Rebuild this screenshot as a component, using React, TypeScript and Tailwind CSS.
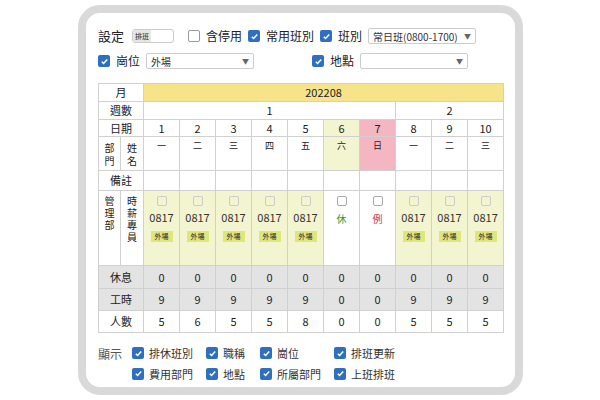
const F = { fontFamily: '"Noto Sans CJK TC", "Noto Sans", sans-serif' }

const days = [
  { d: 1, w: '一', bg: '' }, { d: 2, w: '二', bg: '' }, { d: 3, w: '三', bg: '' },
  { d: 4, w: '四', bg: '' }, { d: 5, w: '五', bg: '' }, { d: 6, w: '六', bg: 'bg-[#f3f5d0]' },
  { d: 7, w: '日', bg: 'bg-[#f4b6c2]' }, { d: 8, w: '一', bg: '' }, { d: 9, w: '二', bg: '' },
  { d: 10, w: '三', bg: '' },
]
const people = [5, 6, 5, 5, 8, 0, 0, 5, 5, 5]
const hours = [9, 9, 9, 9, 9, 0, 0, 9, 9, 9]

function Check({ on = true }: { on?: boolean }) {
  return on ? (
    <span className="inline-flex w-[12px] h-[12px] rounded-[2px] bg-[#2f6fc0] items-center justify-center shrink-0">
      <svg width="9" height="9" viewBox="0 0 10 10"><path d="M2 5.2l2 2 4-4.4" stroke="#fff" strokeWidth="1.7" fill="none" /></svg>
    </span>
  ) : (
    <span className="inline-block w-[12px] h-[12px] rounded-[2px] border border-[#999] bg-white shrink-0" />
  )
}

function Select({ w, text }: { w: string; text: string }) {
  return (
    <div className={`${w} h-[16px] border border-[#ccc] rounded-[2px] flex items-center px-1 text-[10px] text-[#333] whitespace-nowrap overflow-hidden`}>
      <span className="flex-1">{text}</span>
      <span className="text-[7px] text-[#666]">▼</span>
    </div>
  )
}

const td = 'border border-[#d0d0d0] text-center p-0'

export default function App() {
  return (
    <div className="w-[600px] h-[400px] bg-white flex" style={F}>
      <div className="w-[445px] h-[390px] mt-[5px] ml-[78px] rounded-[22px] border-[8px] border-[#d9d9d9] bg-white px-[12px] pt-[14px] text-[#222]">
        <div className="flex items-center gap-[6px] text-[12px] h-[18px] whitespace-nowrap">
          <span className="text-[13px] mr-[2px]">設定</span>
          <div className="w-[42px] h-[14px] border border-[#ccc] rounded-[3px] flex items-center">
            <span className="bg-[#e6e6e6] text-[7px] px-[2px] h-full flex items-center">排班</span>
          </div>
          <span className="w-[2px]" />
          <Check on={false} /><span>含停用</span>
          <Check /><span>常用班別</span>
          <Check /><span>班別</span>
          <Select w="w-[108px]" text="常日班(0800-1700)" />
        </div>
        <div className="flex items-center gap-[6px] text-[12px] mt-[7px] h-[18px]">
          <Check /><span>崗位</span>
          <Select w="w-[108px]" text="外場" />
          <span className="w-[46px]" />
          <Check /><span>地點</span>
          <Select w="w-[108px]" text="" />
        </div>
        <table className="mt-[13px] border-collapse text-[11px] table-fixed w-[404px]">
          <colgroup>
            <col className="w-[22px]" /><col className="w-[23px]" />
            {days.map(d => <col key={d.d} className="w-[36px]" />)}
          </colgroup>
          <tbody>
            <tr className="h-[18px]">
              <td colSpan={2} className={td}>月</td>
              <td colSpan={10} className={`${td} bg-[#f7e38a]`}>202208</td>
            </tr>
            <tr className="h-[17px]">
              <td colSpan={2} className={td}>週數</td>
              <td colSpan={7} className={td}>1</td>
              <td colSpan={3} className={td}>2</td>
            </tr>
            <tr className="h-[17px]">
              <td colSpan={2} className={td}>日期</td>
              {days.map(d => <td key={d.d} className={`${td} ${d.bg}`}>{d.d}</td>)}
            </tr>
            <tr className="h-[34px]">
              <td className={`${td} text-[10px] leading-[13px]`}>部<br />門</td>
              <td className={`${td} text-[10px] leading-[13px]`}>姓<br />名</td>
              {days.map(d => <td key={d.d} className={`${td} ${d.bg} align-top pt-[2px] text-[9px]`}>{d.w}</td>)}
            </tr>
            <tr className="h-[20px]">
              <td colSpan={2} className={td}>備註</td>
              {days.map(d => <td key={d.d} className={td}></td>)}
            </tr>
            <tr className="h-[75px]">
              <td className={`${td} align-top pt-[4px] text-[10px] leading-[12px]`}>管<br />理<br />部</td>
              <td className={`${td} align-top pt-[4px] text-[10px] leading-[12px]`}>時<br />薪<br />專<br />員</td>
              {days.map(d => {
                const off = d.d === 6 || d.d === 7
                return (
                  <td key={d.d} className={`${td} align-top ${off ? '' : 'bg-[#f3f5d0]'}`}>
                    <div className="flex flex-col items-center pt-[5px]">
                      <span className={`w-[10px] h-[10px] border rounded-[2px] ${off ? 'border-[#aaa] bg-white' : 'border-[#ccc]'}`} />
                      {off ? (
                        <span className={`mt-[5px] text-[10px] ${d.d === 6 ? 'text-[#2a9d3a]' : 'text-[#d33]'}`}>{d.d === 6 ? '休' : '例'}</span>
                      ) : (
                        <>
                          <span className="mt-[3px] text-[11px] text-[#333]">0817</span>
                          <span className="mt-[5px] bg-[#dfe67a] text-[7px] px-[4px] leading-[11px]">外場</span>
                        </>
                      )}
                    </div>
                  </td>
                )
              })}
            </tr>
            <tr className="h-[23px] bg-[#e3e3e3]">
              <td colSpan={2} className={td}>休息</td>
              {days.map(d => <td key={d.d} className={td}>0</td>)}
            </tr>
            <tr className="h-[22px] bg-[#e3e3e3]">
              <td colSpan={2} className={td}>工時</td>
              {hours.map((h, i) => <td key={i} className={td}>{h}</td>)}
            </tr>
            <tr className="h-[22px]">
              <td colSpan={2} className={td}>人數</td>
              {people.map((p, i) => <td key={i} className={td}>{p}</td>)}
            </tr>
          </tbody>
        </table>
        <div className="flex text-[11px] mt-[12px] text-[#333]">
          <span className="text-[12px] text-[#555] w-[34px]">顯示</span>
          <div className="grid grid-cols-[74px_54px_74px_80px] gap-y-[4px]">
            {['排休班別', '職稱', '崗位', '排班更新', '費用部門', '地點', '所屬部門', '上班排班'].map(t => (
              <div key={t} className="flex items-center gap-[5px]"><Check /><span>{t}</span></div>
            ))}
          </div>
        </div>
      </div>
    </div>
  )
}
